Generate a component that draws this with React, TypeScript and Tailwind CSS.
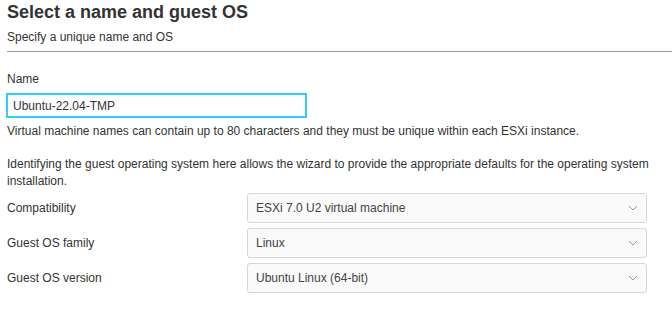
import React from "react";

const Chevron = () => (
    <svg width="10" height="6" viewBox="0 0 10 6" className="text-[#9a9a9a]">
        <path d="M1 1 L5 5 L9 1" fill="none" stroke="currentColor" strokeWidth="1" />
    </svg>
);

const SelectRow: React.FC<{ label: string; value: string }> = ({ label, value }) => (
    <div className="flex items-center h-[30px]">
        <div className="w-[240px] text-[12px]">{label}</div>
        <div className="flex items-center justify-between w-[400px] h-[30px] border border-[#d7d7d7] rounded-[3px] bg-[#fafafa] pl-[8px] pr-[8px]">
            <span className="text-[12px] text-[#444]">{value}</span>
            <Chevron />
        </div>
    </div>
);

export default function App() {
    return (
        <div className="w-[672px] h-[312px] bg-white text-[#333] font-['Liberation_Sans',Arial,sans-serif] overflow-hidden">
            <div className="pl-[7px] pt-[1px]">
                <h1 className="text-[18px] font-bold leading-[22px] text-[#333]">Select a name and guest OS</h1>
                <p className="text-[12px] mt-[6px] leading-[16px]">Specify a unique name and OS</p>
            </div>
            <div className="ml-[7px] mt-[6px] border-t border-[#999]" />
            <div className="pl-[7px] pt-[19px]">
                <div className="text-[12px] leading-[16px]">Name</div>
                <div className="mt-[6px] w-[301px] h-[25px] border-2 border-[#33ccff] flex items-center pl-[5px] -ml-[1px]">
                    <span className="text-[12px] text-[#333]">Ubuntu-22.04-TMP</span>
                </div>
                <div className="text-[12px] leading-[16px] mt-[5px]">
                    Virtual machine names can contain up to 80 characters and they must be unique within each ESXi instance.
                </div>
                <div className="text-[12px] leading-[17px] mt-[17px] pr-[20px]">
                    Identifying the guest operating system here allows the wizard to provide the appropriate defaults for the operating system installation.
                </div>
                <div className="flex flex-col gap-[5px] mt-[3px]">
                    <SelectRow label="Compatibility" value="ESXi 7.0 U2 virtual machine" />
                    <SelectRow label="Guest OS family" value="Linux" />
                    <SelectRow label="Guest OS version" value="Ubuntu Linux (64-bit)" />
                </div>
            </div>
        </div>
    );
}
